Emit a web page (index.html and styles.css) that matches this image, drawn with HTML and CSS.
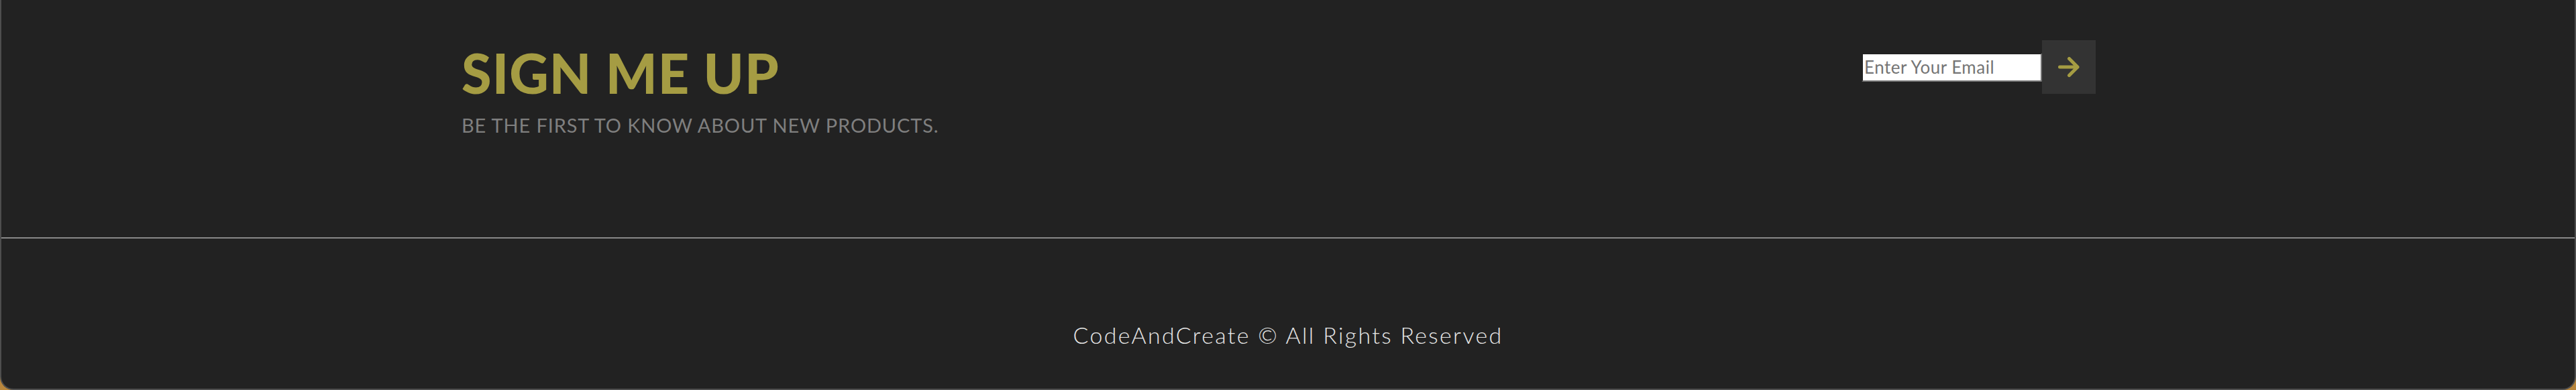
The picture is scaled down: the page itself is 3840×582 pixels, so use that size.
FILE: index.html
```html
<!DOCTYPE html>
<html lang="en">
<head>
<meta charset="utf-8">
<title>Sign Me Up</title>
<link rel="stylesheet" href="styles.css">
</head>
<body>
<div class="window">
  <section class="signup">
    <div class="signup-text">
      <h2 class="signup-title">SIGN ME UP</h2>
      <p class="signup-sub">BE THE FIRST TO KNOW ABOUT NEW PRODUCTS.</p>
    </div>
    <form class="signup-form">
      <input class="signup-input" type="email" placeholder="Enter Your Email">
      <button class="signup-btn" type="button" aria-label="Submit">
        <svg width="32" height="30" viewBox="0 0 32 30" fill="none" stroke="#a59c43" stroke-width="5" stroke-linecap="round" stroke-linejoin="round"><path d="M2.5 15H29M16.5 2.5L29 15L16.5 27.5"/></svg>
      </button>
    </form>
  </section>
  <hr class="divider">
  <footer class="footer">
    <p class="footer-text">CodeAndCreate © All Rights Reserved</p>
  </footer>
</div>
</body>
</html>
```

FILE: styles.css
```css
html, body {
  margin: 0;
  padding: 0;
}
body {
  background: #b8863c;
  width: 3840px;
  height: 582px;
  overflow: hidden;
}
.window {
  box-sizing: border-box;
  height: 582px;
  background: #222222;
  border: 2px solid #4e4e4e;
  border-top: none;
  border-radius: 0 0 20px 20px;
  display: flex;
  flex-direction: column;
  font-family: "Lato", "Open Sans", sans-serif;
}
.signup {
  box-sizing: border-box;
  height: 354px;
  display: flex;
  justify-content: space-between;
  align-items: flex-start;
  padding: 60px 714px 0 686px;
}
.signup-title {
  margin: 0;
  font-size: 81px;
  line-height: 1.2;
  font-weight: 900;
  letter-spacing: 1px;
  color: #a59c43;
}
.signup-sub {
  margin: 13px 0 0;
  font-size: 29px;
  line-height: 1.2;
  font-weight: 400;
  letter-spacing: 0.85px;
  color: #7f7f7f;
}
.signup-form {
  display: flex;
  align-items: center;
  margin: 0;
}
.signup-input {
  box-sizing: border-box;
  width: 269px;
  height: 43px;
  padding: 0 2px;
  border: 2px inset #767676;
  border-radius: 2px;
  background: #ffffff;
  font-family: "Lato", sans-serif;
  font-size: 26px;
  letter-spacing: 0.5px;
  color: #333;
}
.signup-input::placeholder {
  color: #757575;
}
.signup-btn {
  width: 80px;
  height: 80px;
  border: none;
  padding: 0;
  background: #333333;
  display: flex;
  align-items: center;
  justify-content: center;
}
.divider {
  margin: 0;
  border: none;
  height: 2px;
  background: #888888;
}
.footer {
  flex: 1;
  display: flex;
  justify-content: center;
  align-items: flex-start;
  padding-top: 124px;
}
.footer-text {
  margin: 0;
  font-size: 34px;
  line-height: 1.2;
  font-weight: 300;
  letter-spacing: 2.3px;
  color: #e6e6e6;
}
```
